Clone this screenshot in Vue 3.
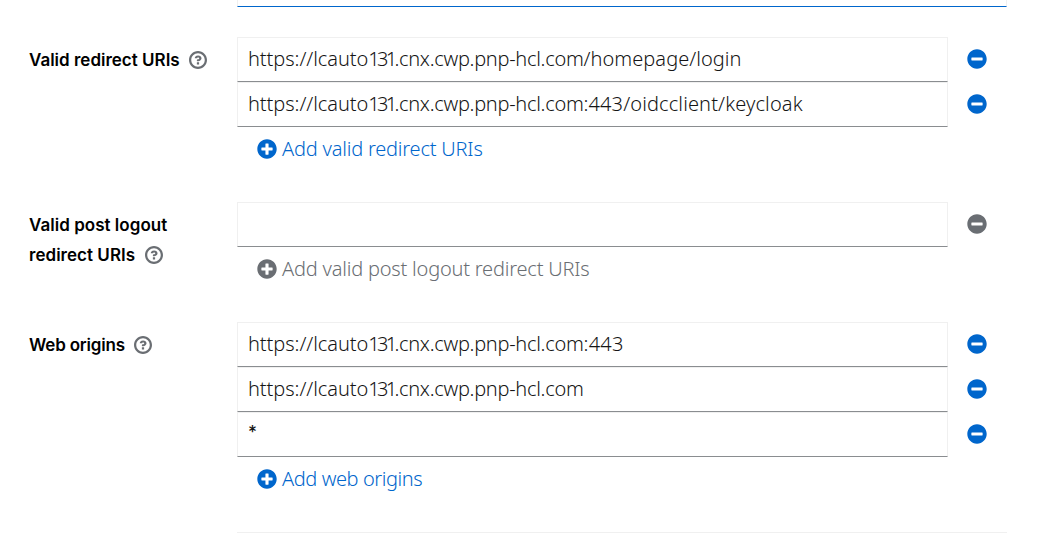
<script setup>
const host = [
  { text: 'https://lcauto', ls: -0.06 },
  { text: '131', ls: -2.7 },
  { text: '.cnx.cwp.pnp-hcl.com', ls: -0.29 },
]
const groups = [
  {
    label: [{ text: 'Valid redirect URIs', ls: 0 }],
    rows: [
      [...host, { text: '/homepage/login', ls: 0.05 }],
      [...host, { text: ':443/oidcclient/keycloak', ls: 0.13 }],
    ],
    add: 'Add valid redirect URIs', ls: -0.2,
  },
  {
    label: [{ text: 'Valid post logout', ls: 0.03 }, { text: 'redirect URIs', ls: 0.03 }],
    rows: [[]],
    add: 'Add valid post logout redirect URIs', ls: -0.2,
    disabled: true,
  },
  {
    label: [{ text: 'Web origins', ls: -0.2 }],
    rows: [
      [...host, { text: ':443', ls: 0.25 }],
      host,
      [{ text: '*', ls: 0 }],
    ],
    add: 'Add web origins', ls: -0.42,
  },
]
</script>

<template>
  <main class="form">
    <div class="previous"></div>
    <section v-for="g in groups" :key="g.add" class="group" :class="{ disabled: g.disabled }">
      <div class="label">
        <div v-for="(l, i) in g.label" :key="l.text" class="label-line">
          <span :style="{ letterSpacing: l.ls + 'px' }">{{ l.text }}</span>
          <svg v-if="i === g.label.length - 1" class="help" viewBox="0 0 1024 1024">
            <path d="M521.3 576C627.5 576 713.7 502 713.7 413.7C713.7 325.4 627.6 253.6 521.3 253.6C366 253.6 334.5 337.7 329.2 407.2C329.2 414.3 335.2 416 343.5 416H445C450.5 416 458 415.5 460.8 406.5C460.8 362.6 582.9 357.1 582.9 413.6C582.9 441.9 556.2 470.9 521.3 473C486.4 475.1 447.3 479.8 447.3 521.7V553.8C447.3 570.8 456.1 576 472 576C487.9 576 521.3 576 521.3 576M575.3 751.3V655.3C575.3 645.5 568.7 639.3 559.3 639.3H463.3C453.5 639.3 447.3 645.9 447.3 655.3V751.3C447.3 761.1 453.9 767.3 463.3 767.3H559.3C569.1 767.3 575.3 760.7 575.3 751.3M512 896C300.2 896 128 723.9 128 512C128 300.3 300.2 128 512 128C723.8 128 896 300.2 896 512C896 723.8 723.7 896 512 896M512.1 0C229.7 0 0 229.8 0 512C0 794.2 229.8 1024 512.1 1024C794.4 1024 1024 794.3 1024 512C1024 229.7 794.4 0 512.1 0" />
          </svg>
        </div>
      </div>
      <div class="control">
        <div v-for="(r, n) in g.rows" :key="n" class="row">
          <div class="input"><span v-for="s in r" :key="s.text" :class="{ star: s.text === '*' }" :style="{ letterSpacing: s.ls + 'px' }">{{ s.text }}</span></div>
          <svg class="circle" viewBox="0 0 512 512">
            <path d="M256 8C119 8 8 119 8 256s111 248 248 248 248-111 248-248S393 8 256 8zM124 296c-6.600 0-12-5.400-12-12v-56c0-6.600 5.400-12 12-12h264c6.600 0 12 5.400 12 12v56c0 6.600-5.400 12-12 12H124z" />
          </svg>
        </div>
        <div class="add">
          <svg class="circle" viewBox="0 0 512 512">
            <path d="M256 8C119 8 8 119 8 256s111 248 248 248 248-111 248-248S393 8 256 8zm144 276c0 6.600-5.400 12-12 12h-92v92c0 6.600-5.400 12-12 12h-56c-6.600 0-12-5.400-12-12v-92h-92c-6.600 0-12-5.400-12-12v-56c0-6.600 5.400-12 12-12h92v-92c0-6.600 5.400-12 12-12h56c6.600 0 12 5.400 12 12v92h92c6.600 0 12 5.400 12 12v56z" />
          </svg>
          <span :style="{ letterSpacing: g.ls + 'px' }">{{ g.add }}</span>
        </div>
      </div>
    </section>
    <div class="next"></div>
  </main>
</template>

<style scoped>
.form {
  height: 533px;
  overflow: hidden;
  background: #fff;
  font: 360 20px/30px "Noto Sans", sans-serif;
  color: #151515;
}
.previous {
  box-sizing: border-box;
  width: 770px;
  height: 7px;
  margin: 0 0 30px 237px;
  border: 1px solid #f0f0f0;
  border-top: 0;
  border-bottom-color: #06c;
}
.group {
  display: grid;
  grid-template-columns: 208px 770px;
  margin: 0 0 30px 29px;
  color: #06c;
}
.disabled { color: #6a6e73; }
.label {
  padding-top: 8px;
  color: #000;
  font-family: Inter, sans-serif;
  font-size: 17px;
  font-weight: 560;
  white-space: nowrap;
}
.label-line { display: flex; align-items: center; height: 30px; }
.help { width: 18px; height: 18px; margin-left: 9.5px; fill: #6a6e73; }
.row { display: flex; align-items: center; }
.input {
  box-sizing: border-box;
  width: 711px;
  height: 45px;
  padding: 6px 10px;
  border: 1px solid #f0f0f0;
  border-bottom-color: #8a8d90;
  color: #151515;
  white-space: pre;
}
.star { font-family: Lato, sans-serif; font-size: 21px; line-height: 1; font-weight: 700; }
.circle { flex: none; width: 20px; height: 20px; fill: currentColor; }
.row .circle { margin: 0 0 1px 19px; }
.add { display: flex; align-items: center; gap: 5px; height: 44px; padding: 0 0 1px 20px; white-space: nowrap; }
.next { width: 770px; height: 1px; margin-left: 237px; background: #f0f0f0; }
</style>

<style>
body { margin: 0; background: #fff; }
</style>
